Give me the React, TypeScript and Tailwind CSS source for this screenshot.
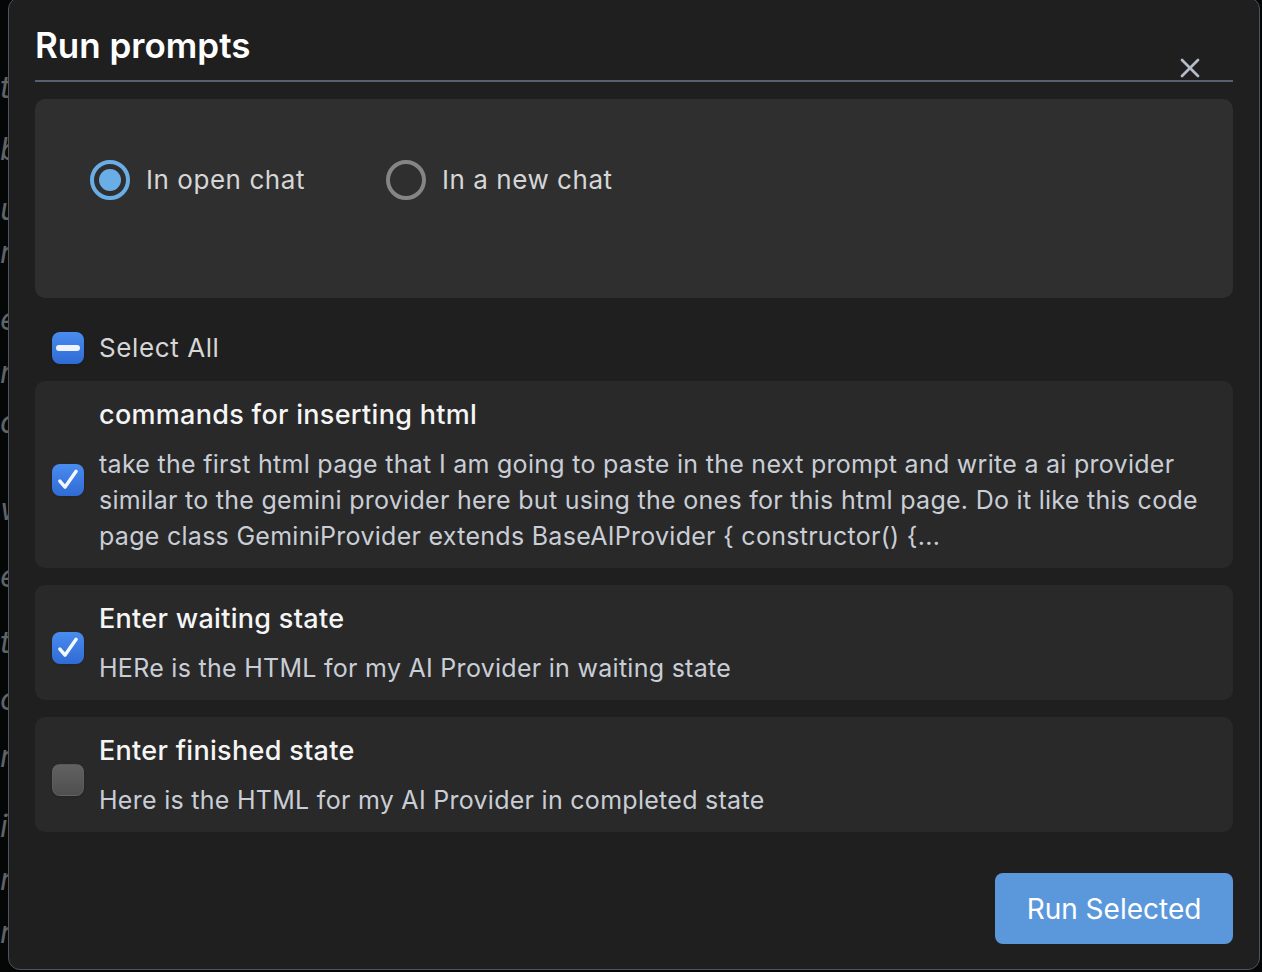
import React from 'react'
import { X } from 'lucide-react'

const font = { fontFamily: 'Inter, "Noto Sans", sans-serif' }

const Checkbox: React.FC<{ state: 'checked' | 'mixed' | 'off' }> = ({ state }) => {
  if (state === 'off') {
    return (
      <div className="w-8 h-8 shrink-0 rounded-[8px] bg-gradient-to-b from-[#616161] to-[#4f4f4f] border border-[#6a6a6a]/40 shadow-sm" />
    )
  }
  return (
    <div className="w-8 h-8 shrink-0 rounded-[8px] bg-gradient-to-b from-[#4a8cf0] to-[#2f6bd4] flex items-center justify-center shadow-sm">
      {state === 'checked' ? (
        <svg className="w-[26px] h-[26px]" viewBox="0 0 24 24" fill="none" stroke="#f4f8ff" strokeWidth={3.2} strokeLinecap="round" strokeLinejoin="round">
          <path d="M4.5 13l4.8 5.5L19.5 4" />
        </svg>
      ) : (
        <div className="w-[24px] h-[6px] rounded-full bg-[#eef4ff]" />
      )}
    </div>
  )
}

const Radio: React.FC<{ checked?: boolean; label: string }> = ({ checked, label }) => (
  <div className="flex items-center gap-4">
    {checked ? (
      <div className="w-10 h-10 rounded-full border-[4px] border-[#6aaee8] flex items-center justify-center">
        <div className="w-[22px] h-[22px] rounded-full bg-[#6aaee8]" />
      </div>
    ) : (
      <div className="w-10 h-10 rounded-full border-[4px] border-[#858585]" />
    )}
    <span className="text-[26px] leading-[36px] tracking-[0.55px] text-[#d6d6d6]">{label}</span>
  </div>
)

const prompts = [
  {
    title: 'commands for inserting html',
    body: 'take the first html page that I am going to paste in the next prompt and write a ai provider similar to the gemini provider here but using the ones for this html page. Do it like this code page class GeminiProvider extends BaseAIProvider { constructor() {...',
    checked: true,
  },
  {
    title: 'Enter waiting state',
    body: 'HERe is the HTML for my AI Provider in waiting state',
    checked: true,
  },
  {
    title: 'Enter finished state',
    body: 'Here is the HTML for my AI Provider in completed state',
    checked: false,
  },
]

// fragments of the page text peeking out from behind the dialog
const bgLetters = [
  { ch: 't', cls: 'top-[70px]' },
  { ch: 'b', cls: 'top-[132px]' },
  { ch: 'u', cls: 'top-[192px]' },
  { ch: 'r', cls: 'top-[235px]' },
  { ch: 'e', cls: 'top-[302px]' },
  { ch: 'ni', cls: 'top-[355px]' },
  { ch: 'd', cls: 'top-[405px]' },
  { ch: 'w', cls: 'top-[492px]' },
  { ch: 'e', cls: 'top-[559px]' },
  { ch: 't', cls: 'top-[625px]' },
  { ch: 'o', cls: 'top-[682px]' },
  { ch: 'r', cls: 'top-[739px]' },
  { ch: 'i', cls: 'top-[809px]' },
  { ch: 'r', cls: 'top-[862px]' },
  { ch: 'r', cls: 'top-[915px]' },
]

export default function App() {
  return (
    <div className="w-[1262px] h-[972px] bg-[#050707] flex overflow-hidden" style={font}>
      <div className="w-2 shrink-0 relative overflow-hidden" aria-hidden>
        {bgLetters.map((l, i) => (
          <span key={i} className={`absolute left-0 ${l.cls} text-[31px] leading-[34px] italic text-[#5f6468]`}>
            {l.ch}
          </span>
        ))}
      </div>

      <div className="flex-1 -mt-[3px] mb-[2px] mr-[2px] rounded-[12px] border border-[#4b5361] bg-[#1f1f1f] px-[26px] flex flex-col">
        <div className="pt-[27px] pb-[15px] border-b-2 border-[#566070] flex items-end justify-between">
          <h1 className="text-[35px] leading-[40px] font-semibold text-white">Run prompts</h1>
          <button className="mr-[27px] translate-y-[19px] text-[#b4bcc8]">
            <X size={32} strokeWidth={2} />
          </button>
        </div>

        <div className="mt-[17px] h-[199px] rounded-[10px] bg-[#2f2f2f] pl-[55px] pt-[61px] flex items-start gap-[81px]">
          <Radio checked label="In open chat" />
          <Radio label="In a new chat" />
        </div>

        <div className="mt-[34px] pl-[17px] flex items-center gap-[15px]">
          <Checkbox state="mixed" />
          <span className="text-[26px] leading-[32px] tracking-[0.6px] text-[#d6d6d6]">Select All</span>
        </div>

        <div className="mt-[17px] flex flex-col gap-[17px]">
          {prompts.map((p) => (
            <div key={p.title} className="rounded-[10px] bg-[#292929] pl-[17px] pr-[24px] pt-[16px] pb-[14px] flex items-center gap-[15px]">
              <div className="mt-[9px]">
                <Checkbox state={p.checked ? 'checked' : 'off'} />
              </div>
              <div className="flex flex-col gap-[13px] min-w-0">
                <div className="text-[27px] leading-[36px] font-medium tracking-[0.3px] text-[#f5f5f5]">{p.title}</div>
                <div className="text-[25px] leading-[36px] tracking-[0.28px] text-[#c9ced6]">{p.body}</div>
              </div>
            </div>
          ))}
        </div>

        <div className="mt-[41px] flex justify-end">
          <button className="w-[238px] h-[71px] rounded-[8px] bg-[#5b98db] text-white text-[28px]">Run Selected</button>
        </div>
      </div>
    </div>
  )
}
